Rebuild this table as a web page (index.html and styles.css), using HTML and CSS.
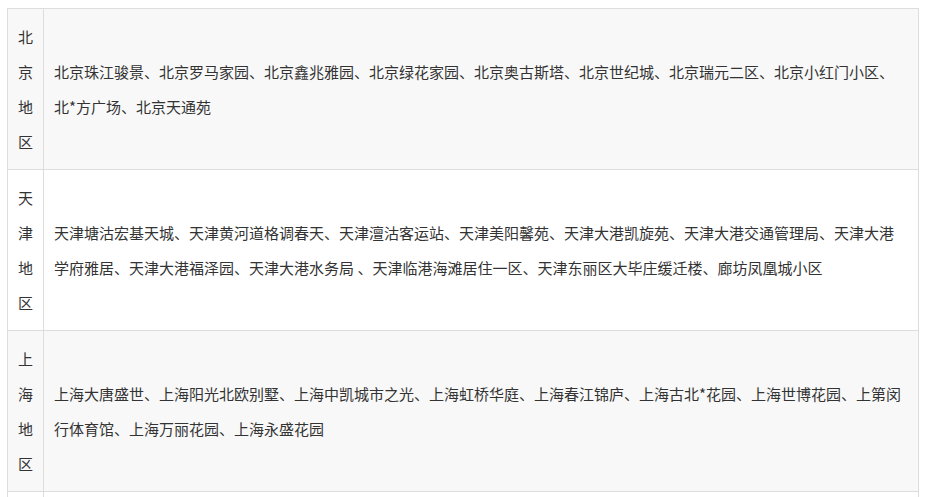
FILE: index.html
```html
<!DOCTYPE html>
<html>
<head lang="zh-CN">
    <meta charset="UTF-8">
    <title>小区分布</title>
    <link rel="stylesheet" href="styles.css">
</head>
<body>
<table class="area">
    <tr>
        <td class="city">北<br>京<br>地<br>区</td>
        <td class="list">北京珠江骏景、北京罗马家园、北京鑫兆雅园、北京绿花家园、北京奥古斯塔、北京世纪城、北京瑞元二区、北京小红门小区、北*方广场、北京天通苑</td>
    </tr>
    <tr>
        <td class="city">天<br>津<br>地<br>区</td>
        <td class="list">天津塘沽宏基天城、天津黄河道格调春天、天津澶沽客运站、天津美阳馨苑、天津大港凯旋苑、天津大港交通管理局、天津大港学府雅居、天津大港福泽园、天津大港水务局 、天津临港海滩居住一区、天津东丽区大毕庄缓迁楼、廊坊凤凰城小区</td>
    </tr>
    <tr>
        <td class="city">上<br>海<br>地<br>区</td>
        <td class="list">上海大唐盛世、上海阳光北欧别墅、上海中凯城市之光、上海虹桥华庭、上海春江锦庐、上海古北*花园、上海世博花园、上第闵行体育馆、上海万丽花园、上海永盛花园</td>
    </tr>
    <tr>
        <td class="city">广<br>州<br>地<br>区</td>
        <td class="list">广州珠江帝景、广州华景新城、广州凤凰城</td>
    </tr>
</table>
</body>
</html>
```
FILE: styles.css
```css
/*初始化*/
body{
    margin:8px 9px 8px 7px;
    font:15px/35px "Microsoft YaHei", "Noto Sans CJK SC", sans-serif;
    color:#333;
    background:#fff;
}

.area{
    width:100%;
    border-collapse:collapse;
}
.area td{
    border:1px solid #ddd;
    padding:10px;
    vertical-align:middle;
}
.area tr:nth-child(odd){
    background:#f8f8f8;
}
.area .city{
    width:14px;
    text-align:center;
}
```
